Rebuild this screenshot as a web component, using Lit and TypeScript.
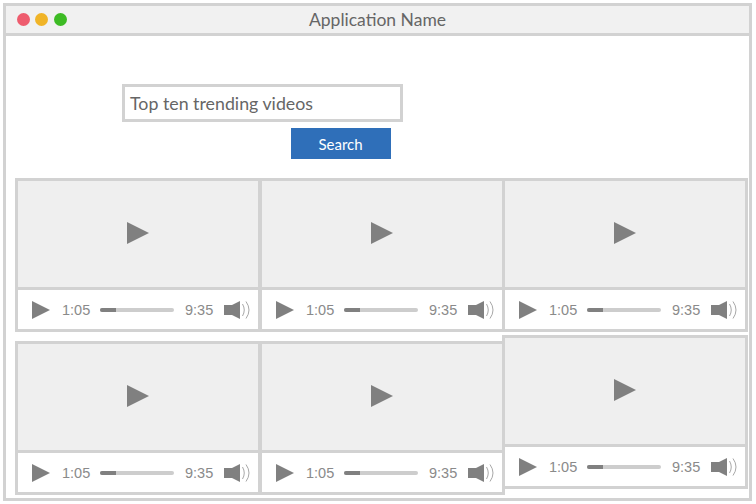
import { LitElement, html, css } from 'lit';
import { customElement } from 'lit/decorators.js';

@customElement('video-card')
export class VideoCard extends LitElement {
  static styles = css`
    :host {
      display: block;
      width: 246px;
      box-sizing: border-box;
      border: 3px solid #d2d2d2;
      background: #fff;
    }
    .screen {
      height: 106px;
      background: #efefef;
      border-bottom: 3px solid #d2d2d2;
      display: flex;
      align-items: center;
      justify-content: center;
    }
    .screen svg { display: block; margin-top: -2px; }
    .controls {
      height: 39px;
      display: flex;
      align-items: center;
      font: 14.5px 'Liberation Sans', Arial, sans-serif;
      color: #8a8a8a;
      padding-left: 14px;
    }
    .controls svg { display: block; flex: none; }
    .start { width: 30px; margin-left: 12px; }
    .track {
      width: 74px;
      height: 4px;
      margin-left: 7.5px;
      border-radius: 2px;
      background: #cdcdcd;
      overflow: hidden;
    }
    .track div { width: 16px; height: 100%; background: #808080; }
    .end { width: 30px; margin-left: 11.5px; }
    .sound { margin-left: 9px; }
  `;

  render() {
    return html`
      <div class="screen">
        <svg width="22" height="22" viewBox="0 0 22 22"><path d="M0 0 L22 11 L0 22 Z" fill="#808080" /></svg>
      </div>
      <div class="controls">
        <svg width="18" height="18" viewBox="0 0 18 18"><path d="M0 0 L18 9 L0 18 Z" fill="#808080" /></svg>
        <span class="start">1:05</span>
        <div class="track"><div></div></div>
        <span class="end">9:35</span>
        <svg class="sound" width="27" height="20" viewBox="0 0 27 20">
          <path d="M0 5 H8 L16 1 V19 L8 15 H0 Z" fill="#808080" />
          <path d="M18.5 4 Q22 10 18.5 16 M22 1.5 Q28 10 22 18.5" fill="none" stroke="#a8a8a8" />
        </svg>
      </div>
    `;
  }
}

@customElement('app-root')
export class AppRoot extends LitElement {
  static styles = css`
    :host {
      display: block;
      width: 756px;
      height: 504px;
      background: #fff;
      font-family: Lato, 'Open Sans', sans-serif;
      overflow: hidden;
    }
    .window {
      margin: 3px 0 0 3px;
      width: 749px;
      height: 498px;
      box-sizing: border-box;
      border: 3px solid #d2d2d2;
    }
    .titlebar {
      position: relative;
      height: 27px;
      background: #f1f1f1;
      border-bottom: 3px solid #d2d2d2;
      display: flex;
      align-items: center;
      justify-content: center;
      font-size: 17.5px;
      color: #666;
    }
    .dots {
      position: absolute;
      left: 10.5px;
      top: 7px;
      display: flex;
      gap: 5.5px;
    }
    .dots span { width: 13px; height: 13px; border-radius: 50%; }
    .red { background: #ee5c6e; }
    .yellow { background: #f0b428; }
    .green { background: #3dbb24; }
    .search {
      height: 142px;
      box-sizing: border-box;
      padding: 48px 0 0 116px;
    }
    .input {
      width: 281px;
      height: 38px;
      box-sizing: border-box;
      border: 3px solid #d2d2d2;
      padding-left: 5px;
      display: flex;
      align-items: center;
      font-size: 17.8px;
      color: #666;
    }
    .button {
      width: 100px;
      height: 31px;
      margin: 6px 0 0 168.5px;
      background: #2f6fb9;
      color: #fff;
      font-size: 15px;
      display: flex;
      align-items: center;
      justify-content: center;
    }
    .grid {
      display: flex;
      padding-left: 9px;
    }
    .column {
      width: 243px;
      display: flex;
      flex-direction: column;
      gap: 9px;
    }
    .column:first-child { width: 244px; }
    .column.tight { gap: 3px; }
  `;

  render() {
    return html`
      <div class="window">
        <div class="titlebar">
          <div class="dots">
            <span class="red"></span><span class="yellow"></span><span class="green"></span>
          </div>
          Application Name
        </div>
        <div class="search">
          <div class="input">Top ten trending videos</div>
          <div class="button">Search</div>
        </div>
        <div class="grid">
          <div class="column"><video-card></video-card><video-card></video-card></div>
          <div class="column"><video-card></video-card><video-card></video-card></div>
          <div class="column tight"><video-card></video-card><video-card></video-card></div>
        </div>
      </div>
    `;
  }
}
